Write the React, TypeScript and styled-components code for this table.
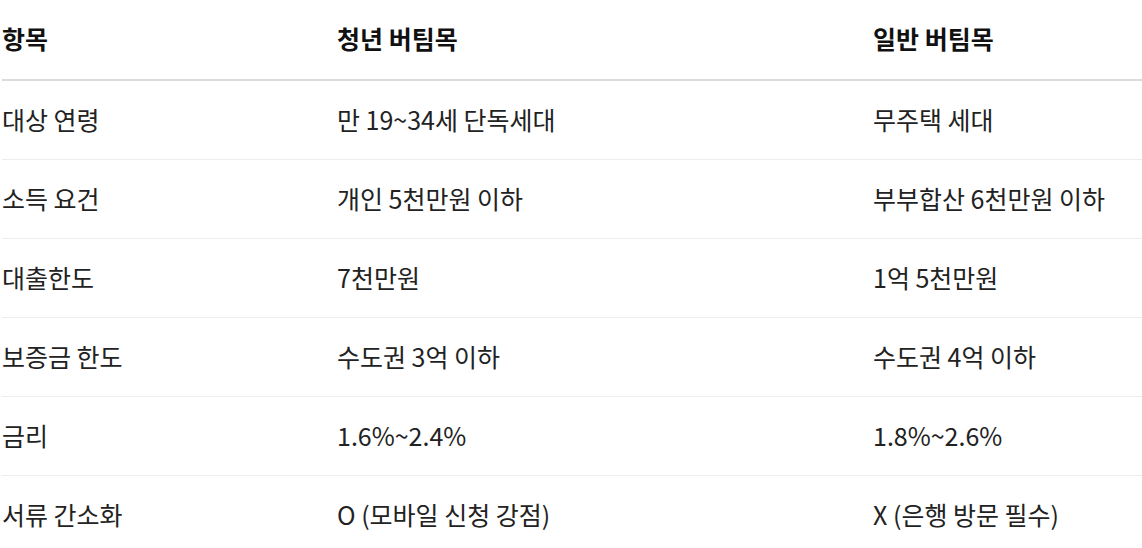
import React from "react";
import styled, { createGlobalStyle } from "styled-components";

const Global = createGlobalStyle`
  html, body { margin: 0; padding: 0; background: #fff; }
  body { font-family: "Noto Sans CJK KR", "Noto Sans", sans-serif; color: #222; }
`;

const Table = styled.table`
  margin-left: 2px;
  width: calc(100% - 2px);
  border-collapse: collapse;
  table-layout: fixed;
  font-size: 25px;
`;

const Col = styled.col<{ $w?: number }>`
  width: ${(p) => (p.$w ? `${p.$w}px` : "auto")};
`;

const HeadCell = styled.th`
  box-sizing: border-box;
  height: 80px;
  padding: 0 0 4px 0;
  text-align: left;
  font-weight: 700;
  color: #111;
  border-bottom: 2px solid #dcdcdc;
  vertical-align: middle;
  white-space: nowrap;
`;

const Cell = styled.td`
  box-sizing: border-box;
  height: 79px;
  padding: 0 0 2px 0;
  vertical-align: middle;
  color: #222;
  white-space: nowrap;
  border-bottom: 1px solid #eeeeee;
`;

const rows: [string, string, string][] = [
  ["대상 연령", "만 19~34세 단독세대", "무주택 세대"],
  ["소득 요건", "개인 5천만원 이하", "부부합산 6천만원 이하"],
  ["대출한도", "7천만원", "1억 5천만원"],
  ["보증금 한도", "수도권 3억 이하", "수도권 4억 이하"],
  ["금리", "1.6%~2.4%", "1.8%~2.6%"],
  ["서류 간소화", "O (모바일 신청 강점)", "X (은행 방문 필수)"],
];

export default function App() {
  return (
    <>
      <Global />
      <Table>
        <colgroup>
          <Col $w={335} />
          <Col $w={536} />
          <Col />
        </colgroup>
        <thead>
          <tr>
            <HeadCell>항목</HeadCell>
            <HeadCell>청년 버팀목</HeadCell>
            <HeadCell>일반 버팀목</HeadCell>
          </tr>
        </thead>
        <tbody>
          {rows.map((r) => (
            <tr key={r[0]}>
              <Cell>{r[0]}</Cell>
              <Cell>{r[1]}</Cell>
              <Cell>{r[2]}</Cell>
            </tr>
          ))}
        </tbody>
      </Table>
    </>
  );
}
